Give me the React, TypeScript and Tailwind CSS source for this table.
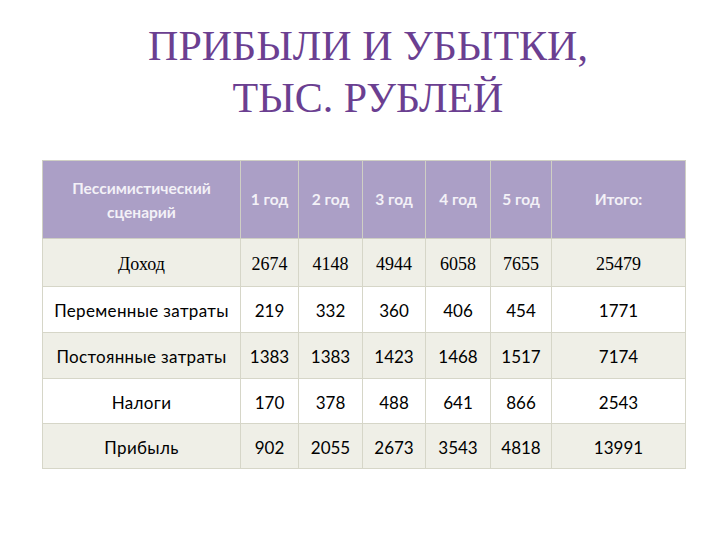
const header = ["1 год", "2 год", "3 год", "4 год", "5 год", "Итого:"];

const rows: { label: string; values: string[]; serif?: boolean }[] = [
  { label: "Доход", values: ["2674", "4148", "4944", "6058", "7655", "25479"], serif: true },
  { label: "Переменные затраты", values: ["219", "332", "360", "406", "454", "1771"] },
  { label: "Постоянные затраты", values: ["1383", "1383", "1423", "1468", "1517", "7174"] },
  { label: "Налоги", values: ["170", "378", "488", "641", "866", "2543"] },
  { label: "Прибыль", values: ["902", "2055", "2673", "3543", "4818", "13991"] },
];

const widths = ["w-[198px]", "w-[58px]", "w-[64px]", "w-[63px]", "w-[65px]", "w-[61px]", "w-[134px]"];
const heights = ["h-[48px]", "h-[46px]", "h-[46px]", "h-[45px]", "h-[45px]"];

export default function App() {
  return (
    <div className="w-[720px] h-[540px] bg-white overflow-hidden">
      <h1 className="pt-[20px] text-center text-[42px] leading-[52px] text-[#6b3f91] font-['Liberation_Serif',serif] pl-[16px]">
        ПРИБЫЛИ И УБЫТКИ,
        <br />
        ТЫС. РУБЛЕЙ
      </h1>
      <div className="mt-[36px] ml-[42px]">
        <table className="border-collapse table-fixed font-['Lato','Noto_Sans',sans-serif] text-[17px] text-black">
          <thead>
            <tr className="h-[78px] bg-[#ab9fc6] text-[#f3f1f7] text-[15.5px]">
              <th className={`${widths[0]} border border-[#cfcfc4] font-bold leading-[24px] px-1`}>
                Пессимистический
                <br />
                сценарий
              </th>
              {header.map((h, i) => (
                <th key={h} className={`${widths[i + 1]} border border-[#cfcfc4] font-bold`}>
                  {h}
                </th>
              ))}
            </tr>
          </thead>
          <tbody>
            {rows.map((r, ri) => (
              <tr
                key={r.label}
                className={`${heights[ri]} ${ri % 2 === 0 ? "bg-[#efefe7]" : "bg-white"} ${
                  r.serif ? "font-['Liberation_Serif',serif] text-[18px]" : ""
                }`}
              >
                <td className={`border border-[#d6d6c8] text-center pt-[3px] ${r.serif ? "" : "tracking-[0.02em]"}`}>
                  {r.label}
                </td>
                {r.values.map((v, vi) => (
                  <td key={vi} className="border border-[#d6d6c8] text-center pt-[3px]">
                    {v}
                  </td>
                ))}
              </tr>
            ))}
          </tbody>
        </table>
      </div>
    </div>
  );
}
